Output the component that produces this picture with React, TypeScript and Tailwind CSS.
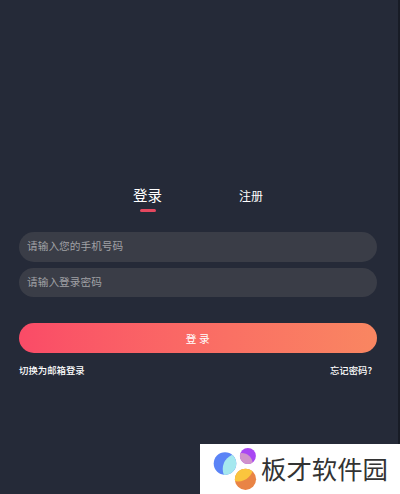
import React from 'react';

const tabs = [
  { key: 'login', label: '登录', active: true },
  { key: 'register', label: '注册', active: false },
];

const fields = [
  { name: 'phone', type: 'tel', placeholder: '请输入您的手机号码', size: 'h-[30px] pb-[3px]' },
  { name: 'password', type: 'password', placeholder: '请输入登录密码', size: 'h-[29.5px] pb-0.5' },
];

const BrandLogo: React.FC = () => {
  return (
    <svg className="-mt-0.5" width="46" height="46" viewBox="0 0 46 46" aria-hidden="true">
      <defs>
        <clipPath id="blue-ball">
          <circle cx="12" cy="18.6" r="11.3" />
        </clipPath>
        <clipPath id="purple-ball">
          <circle cx="34.9" cy="11" r="8" />
        </clipPath>
        <clipPath id="orange-ball">
          <circle cx="32.5" cy="34.3" r="10.6" />
        </clipPath>
      </defs>
      <g clipPath="url(#blue-ball)">
        <rect width="46" height="46" fill="#5a83f6" />
        <circle cx="25" cy="24" r="15.3" fill="#a5e8ef" />
      </g>
      <g clipPath="url(#purple-ball)">
        <rect width="46" height="46" fill="#a947f3" />
        <circle cx="28.6" cy="19.2" r="11.2" fill="#d093cb" />
      </g>
      <g clipPath="url(#orange-ball)">
        <rect width="46" height="46" fill="#e98445" />
        <circle cx="25" cy="21.3" r="15.3" fill="#fac53e" />
      </g>
    </svg>
  );
};

const App: React.FC = () => {
  return (
    <div className="relative h-[494px] w-[400px] overflow-hidden bg-[#181c26] pr-0.5 font-['Noto_Sans_CJK_SC',sans-serif] text-white">
      <main className="h-full bg-[#252a38] px-[19px] pt-[183px]">
        <div className="flex h-[48.5px] items-start gap-[77px] pl-[114px]">
          {tabs.map((tab) => (
            <button
              key={tab.key}
              className={`flex flex-col items-center leading-[23px] ${tab.active ? 'text-[14.5px]' : 'pt-px text-xs'}`}
            >
              {tab.label}
              {tab.active && <span className="mt-[3px] h-[2.5px] w-4 rounded-full bg-[#e4485f]" />}
            </button>
          ))}
        </div>

        <form className="flex flex-col">
          <div className="flex flex-col gap-1.5">
            {fields.map((field) => (
              <input
                key={field.name}
                type={field.type}
                placeholder={field.placeholder}
                className={`${field.size} w-[357.5px] rounded-full bg-[#3a3d47] px-2 text-[10.7px] placeholder:text-[#a0a1a5]`}
              />
            ))}
          </div>
          <button
            type="button"
            className="mt-[26px] h-[30px] w-[357.5px] rounded-full bg-linear-to-r from-[#fa4b67] to-[#f98661] pt-0.5 text-[10.7px]"
          >
            登 录
          </button>
        </form>

        <div className="mt-2 flex w-[353px] justify-between text-[9.4px] leading-[18px] font-medium">
          <a>切换为邮箱登录</a>
          <a>忘记密码?</a>
        </div>
      </main>

      <div className="absolute right-0 bottom-0 flex h-[50px] w-[200px] items-center bg-white pl-[13px]">
        <BrandLogo />
        <span className="ml-0.5 pb-0.5 text-[25.4px] leading-[46px] whitespace-nowrap text-[#333]">板才软件园</span>
      </div>
    </div>
  );
};

export default App;
